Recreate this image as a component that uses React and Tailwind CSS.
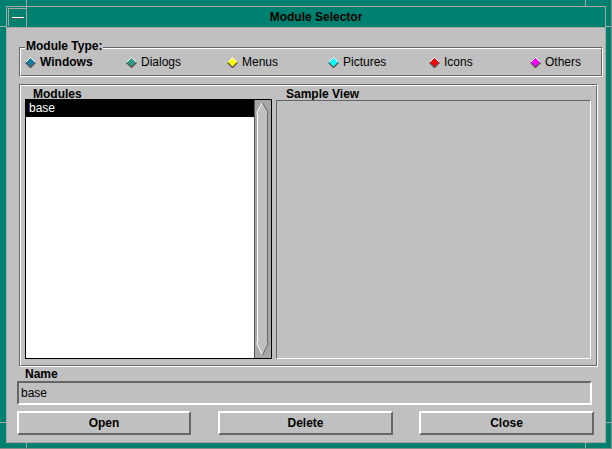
import React from "react";

const radios = [
  { label: "Windows", color: "#1a7c9e", selected: true },
  { label: "Dialogs", color: "#2f9c82" },
  { label: "Menus", color: "#ffff00" },
  { label: "Pictures", color: "#00ffff" },
  { label: "Icons", color: "#ff0000" },
  { label: "Others", color: "#ff00ff" },
];

function Diamond({ color }) {
  return (
    <svg width="11" height="11" viewBox="0 0 11 11" className="shrink-0">
      <polygon points="5.5,0.5 10.5,5.5 5.5,10.5 0.5,5.5" fill={color} />
      <polyline points="0.5,5.5 5.5,0.5 10.5,5.5" fill="none" stroke="#ffffff" strokeWidth="1" />
      <polyline points="0.5,5.5 5.5,10.5 10.5,5.5" fill="none" stroke="#555555" strokeWidth="1.4" />
    </svg>
  );
}

function ScrollBar() {
  return (
    <svg width="17" height="258" viewBox="0 0 17 258" className="shrink-0 block">
      <rect x="0" y="0" width="17" height="258" fill="#a8a8a8" />
      <line x1="0.5" y1="0" x2="0.5" y2="258" stroke="#555555" />
      {/* up arrow */}
      <polygon points="8.5,2.5 14.5,13 2.5,13" fill="#c0c0c0" />
      <line x1="2.5" y1="13" x2="8.5" y2="2.5" stroke="#ffffff" />
      <line x1="8.5" y1="2.5" x2="14.5" y2="13" stroke="#666666" />
      {/* thumb */}
      <rect x="3" y="13" width="11" height="230" fill="#c0c0c0" />
      <line x1="3.5" y1="13" x2="3.5" y2="243" stroke="#ffffff" />
      <line x1="13.5" y1="13" x2="13.5" y2="243" stroke="#666666" />
      {/* down arrow */}
      <polygon points="2.5,243 14.5,243 8.5,255" fill="#c0c0c0" />
      <line x1="2.5" y1="243" x2="8.5" y2="255" stroke="#ffffff" />
      <line x1="14.5" y1="243" x2="8.5" y2="255" stroke="#666666" />
    </svg>
  );
}

function Button({ children, className }) {
  return (
    <button className={"h-[24px] border-2 border-t-white border-l-white border-b-[#666666] border-r-[#666666] bg-[#c0c0c0] font-bold leading-[20px] text-center " + className}>
      {children}
    </button>
  );
}

export default function App() {
  return (
    <div className="relative w-[612px] h-[449px] bg-[#00806f] p-[6px] font-['Liberation_Sans',Arial,sans-serif] text-[12px] text-black overflow-hidden">
      {/* frame resize separators */}
      <div className="absolute left-[26px] top-0 w-px h-[6px] bg-[#a8a8a8]" />
      <div className="absolute left-[585px] top-0 w-px h-[6px] bg-[#a8a8a8]" />
      <div className="absolute left-[26px] bottom-0 w-px h-[6px] bg-[#a8a8a8]" />
      <div className="absolute left-[585px] bottom-0 w-px h-[6px] bg-[#a8a8a8]" />
      <div className="absolute left-0 top-[26px] w-[6px] h-px bg-[#a8a8a8]" />
      <div className="absolute right-0 top-[26px] w-[6px] h-px bg-[#a8a8a8]" />
      <div className="absolute left-0 top-[422px] w-[6px] h-px bg-[#a8a8a8]" />
      <div className="absolute right-0 top-[422px] w-[6px] h-px bg-[#a8a8a8]" />
      <div className="absolute right-0 top-0 w-px h-full bg-[#8a8a8a]" />
      <div className="absolute left-0 bottom-0 w-full h-px bg-[#8a8a8a]" />

      <div className="flex flex-col w-[600px] h-[437px] border border-[#a8a8a8]">
        {/* title bar */}
        <div className="flex h-[21px] border-b border-[#a8a8a8] bg-[#00806f]">
          <div className="w-[20px] h-[20px] pl-px pt-px border-r border-[#a8a8a8]">
            <div className="w-[18px] h-[18px] border-t border-l border-[#a8a8a8] flex items-center justify-center">
              <div className="w-[12px] h-[2px] border-t border-white border-b border-b-[#555555]" />
            </div>
          </div>
          <div className="flex-1 flex items-center justify-center font-bold leading-[20px]">Module Selector</div>
        </div>

        {/* content */}
        <div className="flex-1 flex flex-col bg-[#c0c0c0]">
          {/* Module Type group */}
          <div className="relative mt-[19px] ml-[12px] w-[584px] h-[30px] border border-t-[#666666] border-l-[#666666] border-b-white border-r-white">
            <div className="h-full border border-t-white border-l-white border-b-[#666666] border-r-[#666666] flex items-center pl-[4px] overflow-hidden">
              {radios.map((r) => (
                <div key={r.label} className="w-[101px] shrink-0 flex items-center gap-[4px]">
                  <Diamond color={r.color} />
                  <span className={r.selected ? "font-bold" : ""}>{r.label}</span>
                </div>
              ))}
            </div>
            <div className="absolute -top-[9px] left-[5px] px-px bg-[#c0c0c0] font-bold leading-[14px]">Module Type:</div>
          </div>

          {/* main frame */}
          <div className="mt-[7px] ml-[12px] w-[579px] h-[283px] border border-t-[#666666] border-l-[#666666] border-b-white border-r-white">
            <div className="h-full border border-t-white border-l-white border-b-[#666666] border-r-[#666666] flex pl-[4px]">
              <div className="flex flex-col w-[247px] shrink-0">
                <div className="h-[13px] pl-[8px] font-bold leading-[16px]">Modules</div>
                <div className="h-[260px] border border-black bg-white flex">
                  <div className="flex-1 flex flex-col">
                    <div className="h-[17px] bg-black text-white pl-[3px] leading-[17px]">base</div>
                  </div>
                  <ScrollBar />
                </div>
              </div>
              <div className="flex flex-col ml-[4px] w-[315px] shrink-0">
                <div className="h-[14px] pl-[10px] font-bold leading-[16px]">Sample View</div>
                <div className="h-[259px] border border-t-[#666666] border-l-[#666666] border-b-white border-r-white bg-[#c0c0c0]" />
              </div>
            </div>
          </div>

          {/* Name */}
          <div className="h-[14px] pl-[18px] font-bold leading-[14px]">Name</div>
          <div className="ml-[10px] w-[575px] h-[24px] border-2 border-t-[#666666] border-l-[#666666] border-b-white border-r-white pl-[2px] leading-[20px]">
            base
          </div>

          {/* buttons */}
          <div className="flex mt-[6px] ml-[10px]">
            <Button className="w-[174px]">Open</Button>
            <Button className="w-[175px] ml-[27px]">Delete</Button>
            <Button className="w-[175px] ml-[26px]">Close</Button>
          </div>
        </div>
      </div>
    </div>
  );
}
